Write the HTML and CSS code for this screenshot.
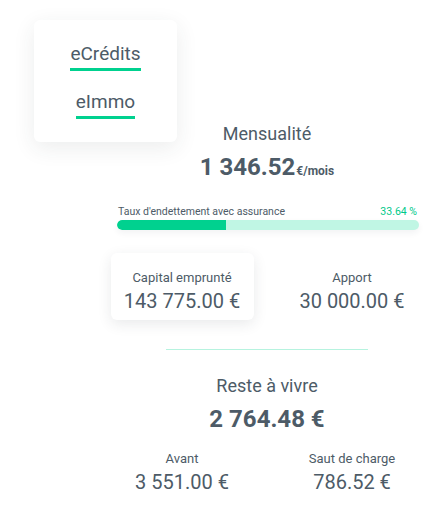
FILE: index.html
```html
<!DOCTYPE html>
<html lang="fr">
<head>
    <meta charset="UTF-8">
    <meta name="viewport" content="width=device-width, initial-scale=1.0">
    <title>Simulation de prêt immobilier</title>
    <link rel="stylesheet" href="styles.css">
</head>
<body>
    <nav class="menu">
        <a class="menu-link" href="#">eCrédits</a>
        <a class="menu-link" href="#">eImmo</a>
    </nav>

    <main class="summary">
        <div class="title">Mensualité</div>
        <div class="amount">1 346.52<span class="unit">€/mois</span></div>

        <div class="rate">
            <div class="rate-head">
                <span>Taux d'endettement avec assurance</span>
                <span class="rate-value">33.64 %</span>
            </div>
            <div class="bar">
                <div class="bar-fill" style="width: 36%"></div>
            </div>
        </div>

        <div class="stats">
            <div class="stat stat-active">
                <div class="stat-label">Capital emprunté</div>
                <div class="stat-value">143 775.00 €</div>
            </div>
            <div class="stat">
                <div class="stat-label">Apport</div>
                <div class="stat-value">30 000.00 €</div>
            </div>
        </div>

        <hr class="divider">

        <div class="title title-rest">Reste à vivre</div>
        <div class="amount">2 764.48 €</div>

        <div class="stats stats-bottom">
            <div class="stat">
                <div class="stat-label">Avant</div>
                <div class="stat-value">3 551.00 €</div>
            </div>
            <div class="stat">
                <div class="stat-label">Saut de charge</div>
                <div class="stat-value">786.52 €</div>
            </div>
        </div>
    </main>
</body>
</html>
```

FILE: styles.css
```css
body {
    margin: 0;
    font-family: Roboto, 'Liberation Sans', Arial, sans-serif;
    color: #4d5b67;
    background: #fff;
    position: relative;
    min-height: 523px;
}
.menu {
    position: absolute;
    left: 34px;
    top: 20px;
    width: 143px;
    height: 122px;
    box-sizing: border-box;
    padding-top: 23px;
    background: #fff;
    border-radius: 6px;
    box-shadow: 0 6px 22px rgba(40, 50, 60, 0.09);
    display: flex;
    flex-direction: column;
    align-items: center;
    gap: 20px;
    z-index: 2;
}
.menu-link {
    color: #4d5b67;
    text-decoration: none;
    font-size: 19px;
    line-height: 22px;
    padding-bottom: 3px;
    border-bottom: 3px solid #00d18f;
}
.summary {
    width: 340px;
    margin-left: 97px;
    padding-top: 123px;
    text-align: center;
}
.title {
    font-size: 18px;
    line-height: 22px;
}
.amount {
    margin-top: 8px;
    font-size: 24px;
    line-height: 28px;
    font-weight: 700;
}
.unit {
    font-size: 12px;
    margin-left: 1px;
}
.rate {
    width: 302px;
    margin: 20px auto 0;
    padding-left: 2px;
}
.rate-head {
    display: flex;
    justify-content: space-between;
    font-size: 10.5px;
    line-height: 14px;
    padding: 0 2px 0 1px;
}
.rate-value {
    color: #00c98a;
}
.bar {
    margin-top: 1px;
    height: 10px;
    border-radius: 5px;
    background: #c0f6e4;
    overflow: hidden;
    box-shadow: 0 3px 6px rgba(40, 50, 60, 0.06);
}
.bar-fill {
    height: 100%;
    background: #00d18f;
    border-radius: 5px 0 0 5px;
}
.stats {
    display: grid;
    grid-template-columns: 1fr 1fr;
    margin-top: 23px;
}
.stat {
    justify-self: center;
    width: 143px;
    box-sizing: border-box;
    padding: 16px 0 7px;
    border-radius: 6px;
}
.stat-active {
    box-shadow: 0 4px 14px rgba(40, 50, 60, 0.10);
}
.stat-label {
    font-size: 13px;
    line-height: 17px;
}
.stat-value {
    margin-top: 3px;
    font-size: 20px;
    line-height: 24px;
}
.divider {
    width: 202px;
    margin: 29px auto 0;
    border: 0;
    height: 1px;
    background: #b6f3df;
}
.title-rest {
    margin-top: 25px;
}
.stats-bottom {
    margin-top: 17px;
}
.stats-bottom .stat {
    padding: 0;
    width: auto;
}
```
